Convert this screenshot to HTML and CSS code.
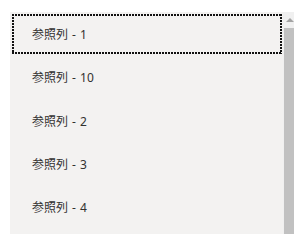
FILE: index.html
```html
<!DOCTYPE html>
<html lang="ja">

<head>
  <meta charset="UTF-8">
  <meta name="viewport" content="width=device-width, initial-scale=1.0">
  <title>参照列</title>

  <link rel="stylesheet" href="styles.css">
</head>

<body>
  <div class="listbox">
    <ul class="options">
      <li class="option focused">参照列 - 1</li>
      <li class="option">参照列 - 10</li>
      <li class="option">参照列 - 2</li>
      <li class="option">参照列 - 3</li>
      <li class="option">参照列 - 4</li>
    </ul>
    <!-- 스크롤바 -->
    <div class="scrollbar">
      <span class="arrow"></span>
      <span class="thumb"></span>
    </div>
  </div>
</body>

</html>
```

FILE: styles.css
```css
* {
  margin: 0;
  padding: 0;
  box-sizing: border-box;
}

html,
body {
  overflow: hidden;
  background: #ffffff;
}

body {
  font-family: "Noto Sans", "Noto Sans CJK JP", sans-serif;
  font-size: 12px;
  color: #323130;
}

.listbox {
  display: flex;
  width: 290px;
  height: 260px;
  margin: 12px 0 0 10px;
  background: #f3f2f1;
}

.options {
  flex: 1;
  list-style: none;
}

.option {
  position: relative;
  display: flex;
  align-items: center;
  height: 43.3px;
  padding: 1px 0 0 22px;
  word-spacing: 1px;
}

/* 포커스 점선 */
.focused::after {
  content: "";
  position: absolute;
  inset: 2px 1px 1px 2px;
  background:
    repeating-linear-gradient(90deg, #111 0 2px, transparent 2px 3px) top / 100% 2px no-repeat,
    repeating-linear-gradient(90deg, #111 0 2px, transparent 2px 3px) bottom / 100% 2px no-repeat,
    repeating-linear-gradient(180deg, #111 0 2px, transparent 2px 3px) left / 2px 100% no-repeat,
    repeating-linear-gradient(180deg, #111 0 2px, transparent 2px 3px) right / 2px 100% no-repeat;
}

/* 스크롤바 */
.scrollbar {
  display: flex;
  flex-direction: column;
  width: 17px;
  background: #f0f0f0;
}

.arrow {
  display: flex;
  justify-content: center;
  align-items: center;
  height: 16px;
  padding-right: 3px;
}

.arrow::before {
  content: "";
  border-left: 4px solid transparent;
  border-right: 4px solid transparent;
  border-bottom: 4px solid #a3a3a3;
}

.thumb {
  flex: 1;
  margin-left: 1px;
  background: #c1c1c1;
}
```
